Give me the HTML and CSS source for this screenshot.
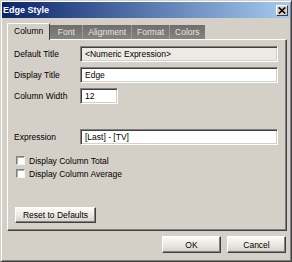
FILE: index.html
```html
<!DOCTYPE html>
<html>
<head>
<meta charset="utf-8">
<link rel="stylesheet" href="styles.css">
</head>
<body>
<div class="window">
  <div class="titlebar">
    <span class="title">Edge Style</span>
    <span class="close"><svg width="8" height="7" viewBox="0 0 8 7"><path d="M0.8 0.5 L7.2 6.5 M7.2 0.5 L0.8 6.5" stroke="#000" stroke-width="1.6" fill="none"/></svg></span>
  </div>
  <div class="content">
    <div class="tabs">
      <div class="tab active">Column</div>
      <div class="tab">Font</div>
      <div class="tab">Alignment</div>
      <div class="tab">Format</div>
      <div class="tab">Colors</div>
    </div>
    <div class="panel">
      <div class="form">
        <span class="label">Default Title</span>
        <div class="field readonly">&lt;Numeric Expression&gt;</div>
        <span class="label">Display Title</span>
        <div class="field">Edge</div>
        <span class="label">Column Width</span>
        <div class="field narrow">12</div>
      </div>
      <div class="form expr">
        <span class="label">Expression</span>
        <div class="field">[Last] - [TV]</div>
      </div>
      <div class="checks">
        <div class="check"><span class="box"></span><span>Display Column Total</span></div>
        <div class="check"><span class="box"></span><span>Display Column Average</span></div>
      </div>
      <div class="btn reset">Reset to Defaults</div>
    </div>
    <div class="footer">
      <div class="btn dlg">OK</div>
      <div class="btn dlg">Cancel</div>
    </div>
  </div>
</div>
</body>
</html>
```

FILE: styles.css
```css
* { box-sizing: border-box; }
body {
  margin: 0;
  background: #d4d0c8;
  font-family: "Liberation Sans", Arial, sans-serif;
  font-size: 8.5px;
  color: #000;
}
.window {
  width: 292px;
  height: 262px;
  border: 1px solid;
  border-color: #d4d0c8 #404040 #404040 #d4d0c8;
  box-shadow: inset 1px 1px #fff, inset -1px -1px #808080;
  padding: 1px;
  display: flex;
  flex-direction: column;
  background: #d4d0c8;
}
.titlebar {
  height: 16px;
  background: linear-gradient(to right, #0a246a, #a6caf0);
  display: flex;
  align-items: center;
  justify-content: space-between;
  padding: 0 2px 0 1px;
}
.title {
  color: #fff;
  font-weight: bold;
  font-size: 9px;
}
.close {
  width: 12px;
  height: 11px;
  background: #d4d0c8;
  border: 1px solid;
  border-color: #fff #404040 #404040 #fff;
  display: flex;
  align-items: center;
  justify-content: center;
}
.close svg { display: block; }
.content {
  flex: 1;
  padding: 5px 3px 0 5px;
  display: flex;
  flex-direction: column;
}
.tabs {
  display: flex;
  align-items: flex-end;
  height: 16px;
  position: relative;
  z-index: 1;
}
.tab {
  height: 14px;
  min-width: 32px;
  padding: 0 5px;
  text-align: center;
  line-height: 14px;
  background: linear-gradient(#6f6e6a, #85847f);
  color: #e6e6e2;
  border-left: 1px solid #9d9b96;
}
.tab.active {
  height: 17px;
  margin-bottom: -1px;
  padding: 0 6px;
  background: #d4d0c8;
  color: #000;
  border-left: 1px solid #fff;
  border-top: 1px solid #fff;
  border-right: 1px solid #404040;
  line-height: 15px;
}
.tab.active + .tab { border-left: none; }
.panel {
  height: 192px;
  border: 1px solid;
  border-color: #fff #404040 #404040 #fff;
  box-shadow: inset -1px -1px #808080;
  padding: 6px 8px 0 6px;
  display: flex;
  flex-direction: column;
  align-items: flex-start;
}
.form {
  display: grid;
  grid-template-columns: 66px 1fr;
  grid-auto-rows: 16px;
  row-gap: 5px;
  align-items: center;
  width: 100%;
}
.form.expr { margin-top: 25px; }
.field {
  height: 16px;
  border: 1px solid;
  border-color: #808080 #fff #fff #808080;
  box-shadow: inset 1px 1px #404040, inset -1px -1px #d4d0c8;
  background: #fff;
  padding-left: 4px;
  line-height: 14px;
  white-space: nowrap;
  overflow: hidden;
}
.field.readonly { background: #eceae4; }
.field.narrow { width: 38px; }
.checks {
  margin-top: 11px;
  padding-left: 2px;
  display: flex;
  flex-direction: column;
  gap: 4px;
}
.check {
  display: flex;
  align-items: center;
  gap: 4px;
  height: 9px;
}
.box {
  width: 9px;
  height: 9px;
  background: #fff;
  border: 1px solid;
  border-color: #808080 #f4f4f4 #f4f4f4 #808080;
  box-shadow: inset 1px 1px #b0aca4;
}
.btn {
  display: flex;
  align-items: center;
  justify-content: center;
  border: 1px solid;
  border-color: #fff #404040 #404040 #fff;
  box-shadow: inset -1px -1px #808080;
  background: linear-gradient(#fbfaf7, #e9e7e1 55%, #d3d0c8);
}
.reset {
  margin-top: 29px;
  margin-left: 1px;
  width: 81px;
  height: 16px;
}
.footer {
  margin-top: 5px;
  display: flex;
  justify-content: flex-end;
  gap: 6px;
  padding-right: 1px;
}
.dlg {
  width: 59px;
  height: 17px;
}
```
